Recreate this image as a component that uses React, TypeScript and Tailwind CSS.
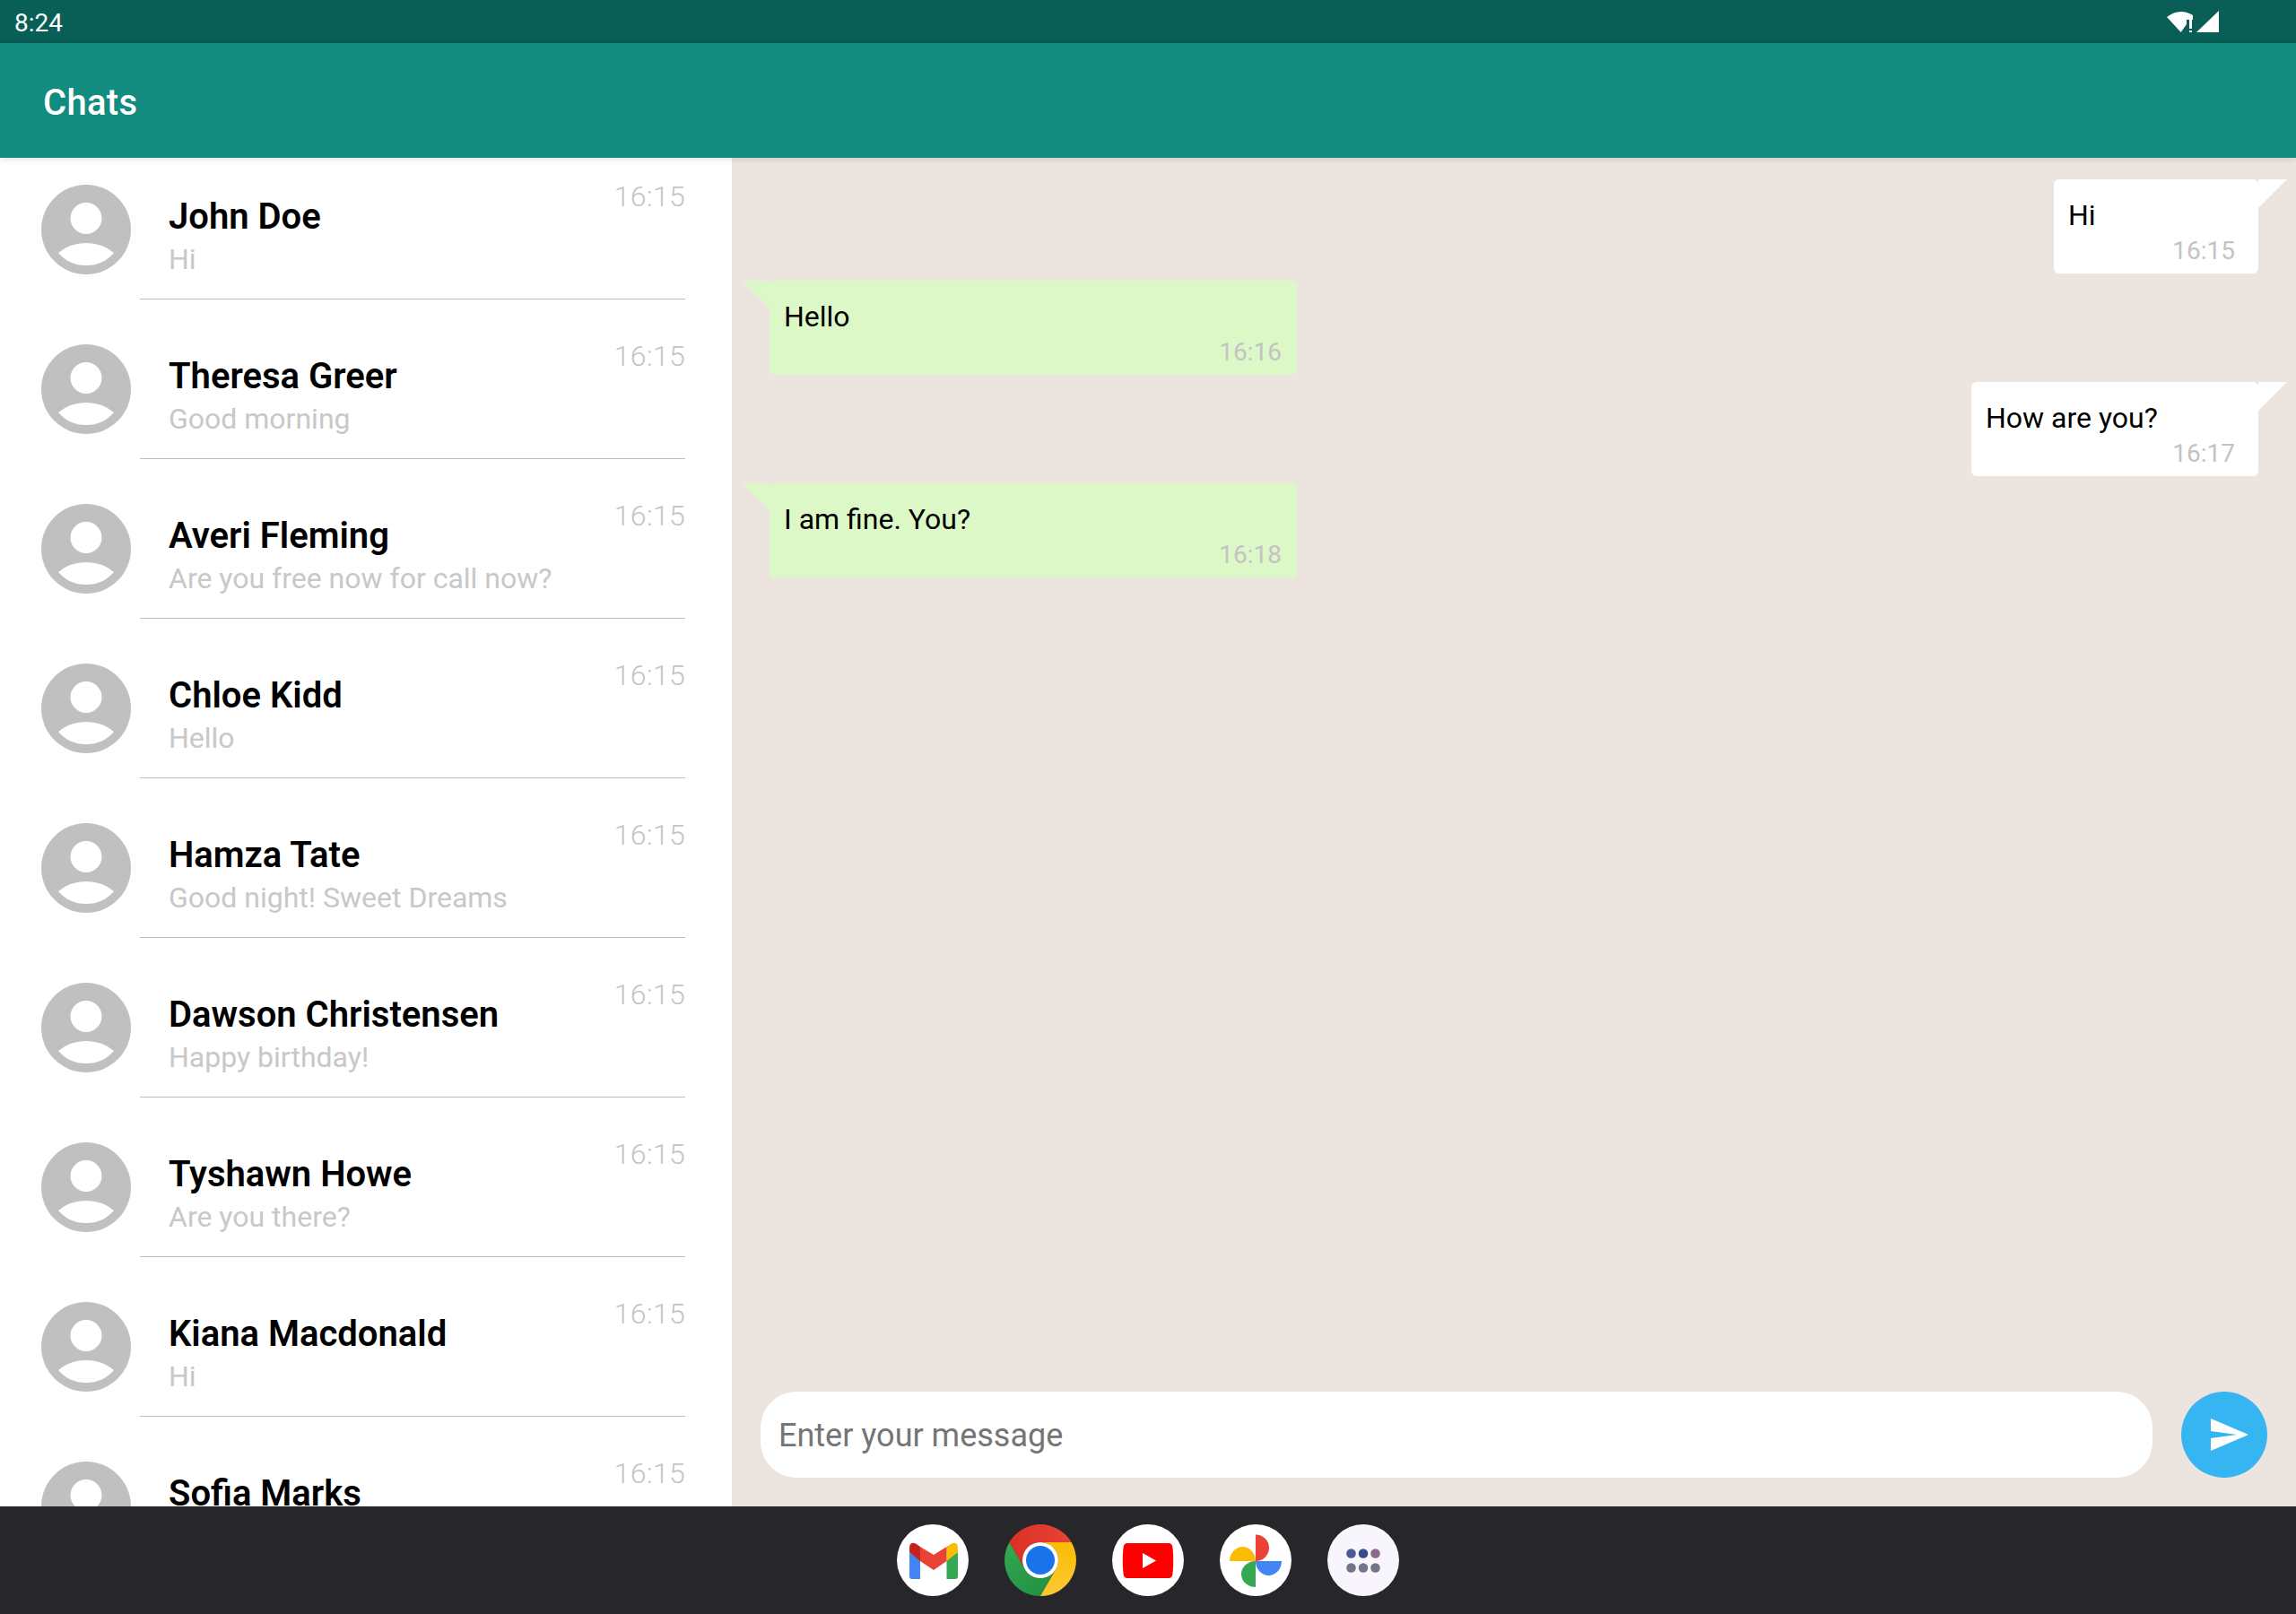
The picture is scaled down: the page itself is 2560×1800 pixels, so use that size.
import React from "react";

interface Chat {
  name: string;
  preview: string;
}

interface Message {
  id: number;
  text: string;
  time: string;
  mine: boolean;
  widthClass: string;
}

const chats: Chat[] = [
  { name: "John Doe", preview: "Hi" },
  { name: "Theresa Greer", preview: "Good morning" },
  { name: "Averi Fleming", preview: "Are you free now for call now?" },
  { name: "Chloe Kidd", preview: "Hello" },
  { name: "Hamza Tate", preview: "Good night! Sweet Dreams" },
  { name: "Dawson Christensen", preview: "Happy birthday!" },
  { name: "Tyshawn Howe", preview: "Are you there?" },
  { name: "Kiana Macdonald", preview: "Hi" },
  { name: "Sofia Marks", preview: "" },
];

const messages: Message[] = [
  { id: 1, text: "Hi", time: "16:15", mine: true, widthClass: "w-[228px]" },
  { id: 2, text: "Hello", time: "16:16", mine: false, widthClass: "w-[588px]" },
  { id: 3, text: "How are you?", time: "16:17", mine: true, widthClass: "w-[320px]" },
  { id: 4, text: "I am fine. You?", time: "16:18", mine: false, widthClass: "w-[588px]" },
];

const Avatar: React.FC = () => (
  <svg viewBox="0 0 100 100" className="w-[100px] h-[100px] mt-[50px] shrink-0">
    <circle cx="50" cy="50" r="50" fill="#c0c0c0" />
    <circle cx="50" cy="37.5" r="17.5" fill="#fff" />
    <path d="M19 76Q32 65 50 65Q68 65 81 76Q69 90 50 90Q31 90 19 76Z" fill="#fff" />
  </svg>
);

const ChatRow: React.FC<{ chat: Chat }> = ({ chat }) => (
  <div className="flex h-[178px] pl-[46px] pr-[52px]">
    <Avatar />
    <div className="ml-[10px] flex-1 flex justify-between border-b border-[#bdbdbd] pl-[32px]">
      <div className="pt-[62px]">
        <div className="text-[40px] leading-[48px] font-semibold text-black">{chat.name}</div>
        <div className="mt-[3px] text-[32px] leading-[40px] font-normal text-[#c8c8c8]">{chat.preview}</div>
      </div>
      <div className="pt-[43px] text-[32px] leading-[40px] tracking-[0.3px] font-light text-[#c4c4c4]">16:15</div>
    </div>
  </div>
);

const Bubble: React.FC<{ message: Message }> = ({ message }) => {
  const { mine } = message;
  return (
    <div
      className={`relative h-[105px] rounded-[6px] pt-[20px] pl-[16px] ${message.widthClass} ${
        mine ? "self-end mr-[42px] bg-white pr-[26px]" : "self-start ml-[42px] bg-[#dcf8c6] pr-[17px]"
      }`}
    >
      {mine ? (
        <svg viewBox="0 0 32 32" className="absolute top-0 -right-[32px] w-[32px] h-[32px]">
          <path d="M0 0H32L0 32Z" fill="#fff" />
        </svg>
      ) : (
        <svg viewBox="0 0 31 30" className="absolute top-0 -left-[31px] w-[31px] h-[30px]">
          <path d="M0 0H31V30Z" fill="#dcf8c6" />
        </svg>
      )}
      <div className="text-[32px] leading-[40px] font-normal text-black">{message.text}</div>
      <div className="mt-[2px] text-right text-[28px] leading-[36px] font-normal text-[#c5c2c5]">{message.time}</div>
    </div>
  );
};

const GmailIcon = () => (
  <svg viewBox="0 0 80 80" className="w-20 h-20 rounded-full bg-white">
    <path d="M14 31L26 40V61H17Q14 61 14 58Z" fill="#4285f4" />
    <path d="M55.5 40L68 31V58Q68 61 65 61H55.5Z" fill="#34a853" />
    <path d="M55.5 25L60 22Q68 18 68 27V31L55.5 41Z" fill="#fbbc04" />
    <path d="M14 27Q14 18 22 22L26 25V41L14 31Z" fill="#c5221f" />
    <path d="M26 25L41 34L55.5 25V41L41 51L26 41Z" fill="#ea4335" />
  </svg>
);

const ChromeIcon = () => (
  <svg viewBox="0 0 80 80" className="w-20 h-20">
    <defs>
      <linearGradient id="chromeRed" x1="0" y1="0" x2="1" y2="0">
        <stop offset="0" stopColor="#d93025" />
        <stop offset="1" stopColor="#ea4335" />
      </linearGradient>
      <linearGradient id="chromeGreen" x1="0" y1="0" x2="1" y2="1">
        <stop offset="0" stopColor="#34a853" />
        <stop offset="1" stopColor="#1e8e3e" />
      </linearGradient>
      <linearGradient id="chromeYellow" x1="0" y1="0" x2="0" y2="1">
        <stop offset="0" stopColor="#fbbc04" />
        <stop offset="1" stopColor="#fcc934" />
      </linearGradient>
    </defs>
    <path d="M5.4 20A40 40 0 0 1 74.6 20H40A20 20 0 0 0 22.7 50Z" fill="url(#chromeRed)" />
    <path d="M5.4 20L22.7 50A20 20 0 0 0 57.3 50L40 80A40 40 0 0 1 5.4 20Z" fill="url(#chromeGreen)" />
    <path d="M74.6 20A40 40 0 0 1 40 80L57.3 50A20 20 0 0 0 40 20Z" fill="url(#chromeYellow)" />
    <circle cx="40" cy="40" r="20" fill="#fff" />
    <circle cx="40" cy="40" r="16" fill="#1a73e8" />
  </svg>
);

const YoutubeIcon = () => (
  <svg viewBox="0 0 80 80" className="w-20 h-20 rounded-full bg-white">
    <path d="M17 21H63Q67 21 67.500 26Q69 40 67.500 55Q67 60 63 60H17Q13 60 12.500 55Q11 40 12.500 26Q13 21 17 21Z" fill="#f00" />
    <path d="M34 32L49 40.500L34 49Z" fill="#fff" />
  </svg>
);

const PhotosIcon = () => (
  <svg viewBox="0 0 80 80" className="w-20 h-20 rounded-full bg-white">
    <path d="M40 11.500A15 14.750 0 0 1 40 41Z" fill="#ea4335" />
    <path d="M11 41A14.500 16 0 0 1 40 41Z" fill="#fbbc04" />
    <path d="M69 41A14.500 16 0 0 1 40 41Z" fill="#4285f4" />
    <path d="M40 70A16 14.500 0 0 1 40 41Z" fill="#34a853" />
  </svg>
);

const AppsIcon = () => (
  <svg viewBox="0 0 80 80" className="w-20 h-20 rounded-full bg-[#f8f6fc]">
    <circle cx="26.500" cy="32.500" r="5.300" fill="#4a5a96" />
    <circle cx="40" cy="32.500" r="5.300" fill="#3a4b8a" />
    <circle cx="53.500" cy="32.500" r="5.300" fill="#8a6b8e" />
    <circle cx="26.500" cy="48.500" r="5.300" fill="#72748c" />
    <circle cx="40" cy="48.500" r="5.300" fill="#72748c" />
    <circle cx="53.500" cy="48.500" r="5.300" fill="#72748c" />
  </svg>
);

const App: React.FC = () => {
  return (
    <div
      className="w-[2560px] h-[1800px] flex flex-col overflow-hidden bg-white"
      style={{ fontFamily: "Roboto, 'Noto Sans', sans-serif" }}
    >
      {/* status bar */}
      <div className="h-[48px] shrink-0 flex items-center justify-between bg-[#095f56] pl-[16px] pr-[86px] text-white">
        <span className="pt-[3px] text-[28px] leading-[48px]">8:24</span>
        <svg viewBox="0 0 58 24" className="w-[58px] h-[24px]">
          <path d="M0 7Q14 -4 29 5V10H22V15L15.700 24Z" fill="#fff" />
          <path d="M25 10H28V20H25ZM25 22H28V24H25Z" fill="#fff" />
          <path d="M33 24L58 0V24Z" fill="#fff" />
        </svg>
      </div>

      {/* toolbar */}
      <div className="relative z-10 h-[128px] shrink-0 flex items-center bg-[#128c7e] pl-[48px] pt-[6px] shadow-[0_1px_8px_rgba(0,0,0,0.15)]">
        <span className="text-[40px] tracking-[0.3px] font-medium text-white">Chats</span>
      </div>

      <div className="flex-1 flex min-h-0">
        {/* chat list */}
        <div className="w-[816px] shrink-0 overflow-hidden bg-white">
          <div className="-mt-[20px]">
            {chats.map((chat) => (
              <ChatRow key={chat.name} chat={chat} />
            ))}
          </div>
        </div>

        {/* conversation */}
        <div className="flex-1 flex flex-col bg-[#ece5df]">
          <div className="flex-1 flex flex-col gap-2 pt-[24px]">
            {messages.map((m) => (
              <Bubble key={m.id} message={m} />
            ))}
          </div>
          <div className="flex items-center gap-[32px] pl-[32px] pr-[32px] pb-[32px]">
            <div className="flex-1 h-[96px] flex items-center rounded-[40px] bg-white pl-[20px] pt-[2px]">
              <span className="text-[36px] text-[#757575]">Enter your message</span>
            </div>
            <button className="w-[96px] h-[96px] rounded-full bg-[#36b5f2]">
              <svg viewBox="0 0 96 96" className="w-[96px] h-[96px]">
                <path d="M33 30L75 48L33 66V52L62 48L33 44Z" fill="#fff" />
              </svg>
            </button>
          </div>
        </div>
      </div>

      {/* dock */}
      <div className="h-[120px] shrink-0 flex items-center justify-center gap-[40px] bg-[#27262b]">
        <GmailIcon />
        <ChromeIcon />
        <YoutubeIcon />
        <PhotosIcon />
        <AppsIcon />
      </div>
    </div>
  );
};

export default App;
